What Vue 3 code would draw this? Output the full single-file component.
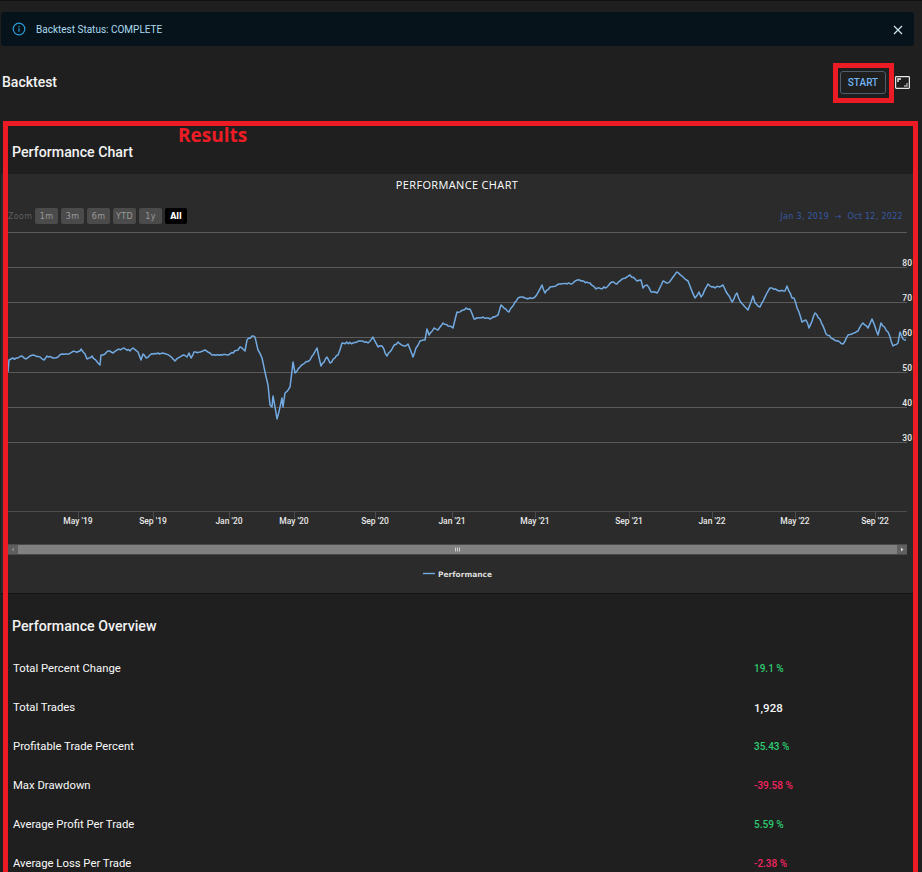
<script setup>
const anchors = [[8,372],[9,360],[11,359],[18,358],[22,356],[26,359],[30,356],[34,355],[40,357],[44,360],[47,356],[53,358],[58,357],[62,354],[67,354],[72,352],[80,351],[81,349],[85,354],[87,359],[92,356],[98,363],[100,365],[101,355],[105,354],[108,351],[113,353],[117,350],[124,348],[130,351],[133,348],[138,352],[141,360],[143,354],[146,358],[150,355],[158,353],[166,354],[170,356],[175,361],[178,358],[183,355],[187,357],[189,353],[191,358],[194,352],[200,352],[205,350],[210,353],[213,355],[222,355],[230,354],[238,350],[240,347],[243,349],[245,351],[247,340],[252,336],[255,337],[258,350],[262,358],[265,372],[268,385],[270,405],[272,407],[273,396],[277,419],[282,398],[283,407],[285,393],[290,387],[293,362],[295,373],[300,367],[310,360],[317,348],[321,366],[327,357],[330,363],[338,355],[342,343],[353,343],[360,341],[368,343],[373,337],[378,347],[382,346],[387,356],[393,347],[398,342],[405,346],[408,344],[413,357],[416,348],[420,341],[425,340],[427,329],[429,335],[434,328],[438,330],[443,323],[453,328],[457,312],[463,310],[466,308],[470,309],[474,319],[483,317],[490,319],[498,315],[501,305],[509,312],[518,298],[523,297],[528,299],[535,297],[542,285],[545,293],[550,287],[557,285],[567,284],[573,283],[578,280],[590,283],[596,289],[607,287],[612,282],[617,284],[620,281],[630,275],[637,281],[641,280],[643,288],[647,285],[651,292],[657,293],[663,281],[668,283],[677,272],[688,281],[695,298],[699,292],[701,297],[708,284],[715,288],[723,285],[732,302],[737,293],[740,301],[748,310],[753,296],[755,303],[760,307],[767,293],[770,288],[777,290],[785,291],[787,286],[792,298],[794,298],[802,322],[806,320],[809,328],[815,313],[820,319],[826,334],[833,339],[843,344],[848,335],[858,331],[863,323],[868,328],[872,319],[878,335],[881,323],[888,332],[893,346],[898,343],[900,332],[903,339],[906,340]]

// Interpolate the traced anchors and add a small repeatable wiggle.
let seed = 7
const wiggle = () => {
  seed = (seed * 16807) % 2147483647
  return (seed / 2147483647 - 0.5) * 1.8
}
const points = []
anchors.forEach(([x, y], i) => {
  points.push(`${x},${y}`)
  const next = anchors[i + 1]
  if (!next) return
  const steps = Math.floor((next[0] - x) / 1.5)
  for (let s = 1; s < steps; s++) {
    const t = s / steps
    points.push(`${(x + (next[0] - x) * t).toFixed(1)},${(y + (next[1] - y) * t + wiggle()).toFixed(1)}`)
  }
})
const linePoints = points.join(' ')

const gridLines = [232, 267, 302, 337, 372, 407, 442]
const yLabels = [
  { t: '80', y: 263 }, { t: '70', y: 298 }, { t: '60', y: 333 },
  { t: '50', y: 368 }, { t: '40', y: 403 }, { t: '30', y: 438 }
]
const xLabels = [
  { t: "May '19", x: 78 }, { t: "Sep '19", x: 153 }, { t: "Jan '20", x: 229 },
  { t: "May '20", x: 294 }, { t: "Sep '20", x: 375 }, { t: "Jan '21", x: 452 },
  { t: "May '21", x: 535 }, { t: "Sep '21", x: 629 }, { t: "Jan '22", x: 712 },
  { t: "May '22", x: 795 }, { t: "Sep '22", x: 875 }
]
const zoomButtons = [
  { t: '1m', x: 35, w: 23 }, { t: '3m', x: 61, w: 23 }, { t: '6m', x: 87, w: 23 },
  { t: 'YTD', x: 113, w: 23 }, { t: '1y', x: 139, w: 23 }, { t: 'All', x: 165, w: 22, on: true }
]
const rows = [
  { label: 'Total Percent Change', value: '19.1 %', tone: 'up' },
  { label: 'Total Trades', value: '1,928', tone: 'plain' },
  { label: 'Profitable Trade Percent', value: '35.43 %', tone: 'up' },
  { label: 'Max Drawdown', value: '-39.58 %', tone: 'down' },
  { label: 'Average Profit Per Trade', value: '5.59 %', tone: 'up' },
  { label: 'Average Loss Per Trade', value: '-2.38 %', tone: 'down' }
]
</script>

<template>
  <div class="page">
    <div class="alert">
      <svg class="info" width="14" height="14" viewBox="0 0 14 14" fill="none">
        <circle cx="7" cy="7" r="5.8" stroke="#2a9ed8" stroke-width="1.2" />
        <path d="M7 6.2v3.6" stroke="#2a9ed8" stroke-width="1.2" />
        <path d="M7 4v1.2" stroke="#2a9ed8" stroke-width="1.2" />
      </svg>
      <span class="alert-text">Backtest Status: COMPLETE</span>
      <svg class="close" width="10" height="10" viewBox="0 0 10 10" fill="none">
        <path d="M1 1l8 8M9 1l-8 8" stroke="#cfe6f2" stroke-width="1.2" />
      </svg>
    </div>

    <div class="title-row">
      <h1 class="title">Backtest</h1>
      <button class="start">START</button>
      <svg class="expand" width="15" height="13" viewBox="0 0 15 13" fill="none">
        <rect x="0.6" y="0.6" width="13.8" height="11.8" rx="0.8" stroke="#e8e8e8" stroke-width="1.2" />
        <path d="M3 6V3h3" stroke="#f0f0f0" stroke-width="1.4" />
        <path d="M12 7v3H9" stroke="#a8a8a8" stroke-width="1.4" />
      </svg>
    </div>

    <section class="results">
      <h2 class="section-title chart-heading">Performance Chart</h2>

      <svg class="chart" width="913" height="420" viewBox="1 174 913 420">
        <rect x="1" y="174" width="913" height="419" fill="#2b2b2b" />
        <path d="M1 593.5h913" stroke="#141414" />
        <text x="457" y="189" class="chart-title" text-anchor="middle">PERFORMANCE CHART</text>

        <text x="8" y="219" class="range zoom-word">Zoom</text>
        <g v-for="b in zoomButtons" :key="b.t">
          <rect :x="b.x" y="208" :width="b.w" height="16" rx="2" :fill="b.on ? '#000' : '#4b4b4b'" />
          <text :x="b.x + b.w / 2" y="219" text-anchor="middle" :class="b.on ? 'zoom-on' : 'zoom-off'">{{ b.t }}</text>
        </g>
        <text x="903" y="219" class="range dates" text-anchor="end">Jan 3, 2019 &#160;→&#160; Oct 12, 2022</text>

        <path v-for="y in gridLines" :key="y" :d="`M8 ${y + 0.5}H907`" stroke="#5a5a5a" />
        <path d="M8 511.5H907" stroke="#4c4c4c" />
        <polyline :points="linePoints" fill="none" stroke="#72aae2" stroke-width="1.5" stroke-linejoin="round" />

        <text v-for="l in yLabels" :key="l.t" x="912" :y="l.y + 3" text-anchor="end" class="axis">{{ l.t }}</text>
        <g v-for="l in xLabels" :key="l.t">
          <path :d="`M${l.x + 0.5} 512V518`" stroke="#4c4c4c" />
          <text :x="l.x" y="524" text-anchor="middle" class="axis">{{ l.t }}</text>
        </g>

        <rect x="8" y="544" width="899" height="11" fill="#4a4a4a" />
        <rect x="18" y="545" width="879" height="9" fill="#808080" />
        <rect x="8" y="545" width="10" height="9" fill="#5e5e5e" />
        <rect x="897" y="545" width="10" height="9" fill="#606060" />
        <path d="M14 547.5l-2.5 2 2.5 2z" fill="#8a8a8a" />
        <path d="M901 547.5l2.5 2-2.5 2z" fill="#d8d8d8" />
        <path d="M455.5 547.5v4M457.5 547.5v4M459.5 547.5v4" stroke="#cfcfcf" />

        <path d="M423 573.5h12" stroke="#72aae2" stroke-width="1.4" />
        <text x="438" y="577" class="legend">Performance</text>
      </svg>

      <h2 class="section-title overview-heading">Performance Overview</h2>
      <div class="rows">
        <div v-for="r in rows" :key="r.label" class="row">
          <span class="label">{{ r.label }}</span>
          <span class="value" :class="r.tone">{{ r.value }}</span>
        </div>
      </div>
    </section>

    <div class="mark mark-start"></div>
    <div class="mark mark-results"></div>
    <div class="mark-text">Results</div>
  </div>
</template>

<style scoped>
.page {
  position: relative;
  width: 922px;
  height: 872px;
  overflow: hidden;
  box-sizing: border-box;
  border-top: 1px solid #111;
  background: #1f1f1f;
  font-family: Roboto, "Liberation Sans", sans-serif;
  color: #f2f2f2;
}
.alert {
  display: flex;
  align-items: center;
  width: 913px;
  height: 34px;
  margin: 11px 0 0 1px;
  box-sizing: border-box;
  padding: 0 11px 0 11px;
  background: #07131a;
  border-radius: 3px;
}
.alert-text {
  margin-left: 10px;
  font-size: 10px;
  color: #a9dcf0;
}
.close { margin-left: auto; margin-top: 2px; }
.title-row {
  display: flex;
  align-items: center;
  height: 22px;
  margin-top: 25px;
  padding: 0 12px 0 2px;
}
.title {
  margin: 0 auto 0 0;
  font-size: 14px;
  font-weight: 500;
}
.start {
  width: 46px;
  height: 23px;
  padding: 0;
  background: transparent;
  border: 1px solid #4d5d6c;
  border-radius: 3px;
  color: #6fb3f0;
  font: 500 10px Roboto, sans-serif;
}
.expand { margin-left: 9px; }
.results {
  margin-top: 50px;
}
.section-title {
  margin: 0 0 0 12px;
  font-size: 14.2px;
  font-weight: 500;
  line-height: 18px;
}
.chart-heading { padding: 0; margin-bottom: 13px; }
.chart {
  display: block;
  margin-left: 1px;
}
.overview-heading { margin-top: 23px; margin-bottom: 14px; }
.rows { display: flex; flex-direction: column; }
.row {
  display: flex;
  align-items: center;
  height: 39px;
  padding-left: 13px;
}
.label {
  width: 741px;
  font-size: 11.3px;
  font-weight: 400;
  color: #fafafa;
}
.value { font-size: 10px; font-weight: 500; }
.up { color: #2ecc71; }
.down { color: #f5245f; }
.plain { color: #f5f5f5; font-size: 11.5px; }

.chart-title {
  font: 400 11px "Open Sans", sans-serif;
  fill: #ffffff;
  letter-spacing: 0.35px;
}
.range { font: 8px "DejaVu Sans", sans-serif; letter-spacing: 0.3px; }
.zoom-word { fill: #5f5f5f; }
.dates { fill: #3659a5; }
.zoom-off { font: 8px "DejaVu Sans", sans-serif; fill: #9a9a9a; letter-spacing: 0.4px; }
.zoom-on { font: 700 8px "DejaVu Sans", sans-serif; fill: #fff; }
.axis { font: 500 8.5px Roboto, sans-serif; fill: #e8e8e8; }
.legend { font: 700 7.5px "DejaVu Sans", sans-serif; fill: #dcdcdc; }

.mark { position: absolute; box-sizing: border-box; border: 5px solid #ed1c24; }
.mark-start { left: 833px; top: 62px; width: 61px; height: 40px; }
.mark-results { left: 3px; top: 120px; width: 915px; height: 780px; }
.mark-text {
  position: absolute;
  left: 178px;
  top: 121px;
  font: 700 19px "Open Sans", sans-serif;
  color: #ed1c24;
}
</style>
